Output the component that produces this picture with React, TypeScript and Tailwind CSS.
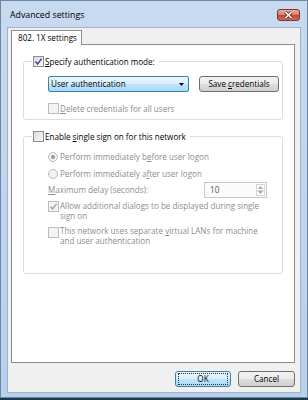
import type { ReactNode } from 'react';

function CheckBox({ checked = false, disabled = false }: { checked?: boolean; disabled?: boolean }) {
  return (
    <span
      className={`flex h-[11px] w-[11px] shrink-0 items-center justify-center border ${
        disabled
          ? 'border-[#bcbcbc] bg-[#f4f4f4]'
          : 'border-[#8e8f8f] bg-[linear-gradient(135deg,#d8dce2,#f7f8f9)]'
      }`}
    >
      {checked && (
        <svg width="9" height="9" viewBox="0 0 9 9">
          <path
            d="M1.5 4.6 L3.6 7 L7.6 1.6"
            fill="none"
            stroke={disabled ? '#a9a9a9' : '#3d4f84'}
            strokeWidth="1.5"
          />
        </svg>
      )}
    </span>
  );
}

function Radio({ selected = false }: { selected?: boolean }) {
  return (
    <span className="flex h-[10px] w-[10px] shrink-0 items-center justify-center rounded-full border border-[#bcbcbc] bg-[#f3f3f3]">
      {selected && <span className="h-[4px] w-[4px] rounded-full bg-[#9a9a9a]" />}
    </span>
  );
}

function Btn({ children, width, primary = false }: { children: ReactNode; width: string; primary?: boolean }) {
  return (
    <div
      className={`flex h-[16px] ${width} items-center justify-center rounded-[3px] border ${
        primary
          ? 'border-[#3c7fb1] bg-[linear-gradient(#eaf6fd_0%,#d9f0fc_50%,#bee6fd_51%,#a7d9f5_100%)]'
          : 'border-[#707070] bg-[linear-gradient(#f2f2f2_0%,#ebebeb_50%,#dddddd_51%,#cfcfcf_100%)]'
      }`}
    >
      {primary ? (
        <span className="flex h-[12px] w-[50px] items-center justify-center border border-dotted border-[#333]">
          {children}
        </span>
      ) : (
        children
      )}
    </div>
  );
}

export default function App() {
  return (
    <div className="h-[400px] w-[308px] bg-[#1c3a4a] font-['Open_Sans',sans-serif] text-[8.1px] leading-[10px] text-black">
      <div className="flex h-[398px] flex-col border border-[#6f86a3] bg-[linear-gradient(#c7daf0,#b9d0ea)]">
        {/* title bar */}
        <div className="flex h-[26px] items-start justify-between">
          <div className="pl-[9px] pt-[9px] text-[8.8px] leading-[10px]">Advanced settings</div>
          <div className="mr-[7px] mt-[8px] flex h-[12px] w-[23px] items-center justify-center rounded-[3px] border border-[#7b3530] bg-[linear-gradient(#eaaea1_0%,#d9806f_45%,#c3463a_55%,#d06a56_100%)]">
            <svg width="9" height="8" viewBox="0 0 9 8">
              <path d="M1.5 1 L7.5 7 M7.5 1 L1.5 7" stroke="#5a2420" strokeWidth="3" />
              <path d="M1.5 1 L7.5 7 M7.5 1 L1.5 7" stroke="#ffffff" strokeWidth="1.6" />
            </svg>
          </div>
        </div>

        {/* client area */}
        <div className="mx-[6px] flex h-[366px] flex-col border border-[#9fb3cc] bg-[#f0f0f0] pl-[3px] pr-[5px] pt-[2px]">
          <div className="flex">
            <div className="relative z-10 -mb-px flex h-[15px] w-[71px] items-center border-x border-t border-[#898c95] bg-white pl-[6px]">
              802. 1X settings
            </div>
          </div>

          <div className="h-[319px] border border-[#898c95] bg-white px-[11px]">
            <fieldset className="mt-[11px] h-[64px] rounded-[3px] border border-[#d5dfe5]">
              <legend className="ml-[8px] flex items-center gap-[1px] pl-[1px] pr-[4px]">
                <CheckBox checked />
                <span>
                  <span className="underline">S</span>pecify authentication mode:
                </span>
              </legend>
              <div className="pl-[24px]">
                <div className="mt-[9px] flex items-center gap-[10px]">
                  <div className="flex h-[16px] w-[141px] items-center justify-between rounded-[2px] border border-[#3c7fb1] bg-[linear-gradient(#eaf6fd_0%,#d9f0fc_50%,#bee6fd_51%,#a7d9f5_100%)] pl-[2px] pr-[4px]">
                    <span>User authentication</span>
                    <svg width="5" height="3" viewBox="0 0 5 3">
                      <path d="M0 0 H5 L2.5 3 Z" fill="#000" />
                    </svg>
                  </div>
                  <Btn width="w-[80px]">
                    <span>
                      Save <span className="underline">c</span>redentials
                    </span>
                  </Btn>
                </div>
                <div className="mt-[11px] flex items-center gap-[1px] text-[#8d8d8d]">
                  <CheckBox disabled />
                  <span>
                    <span className="underline">D</span>elete credentials for all users
                  </span>
                </div>
              </div>
            </fieldset>

            <fieldset className="mt-[11px] h-[143px] rounded-[3px] border border-[#d5dfe5]">
              <legend className="ml-[8px] flex items-center gap-[1px] pl-[1px] pr-[4px]">
                <CheckBox />
                <span>
                  Enable <span className="underline">s</span>ingle sign on for this network
                </span>
              </legend>
              <div className="pl-[24px] text-[#8d8d8d]">
                <div className="mt-[9px] flex h-[11px] items-center gap-[2px]">
                  <Radio selected />
                  <span>
                    Perform immediately b<span className="underline">e</span>fore user logon
                  </span>
                </div>
                <div className="mt-[6px] flex h-[11px] items-center gap-[2px]">
                  <Radio />
                  <span>
                    Perform immediately a<span className="underline">f</span>ter user logon
                  </span>
                </div>
                <div className="mt-[3px] flex h-[16px] items-center">
                  <span className="w-[156px]">
                    <span className="underline">M</span>aximum delay (seconds):
                  </span>
                  <div className="flex h-[16px] w-[63px] items-center justify-between border border-[#c6c9cd] bg-[#fbfbfb] pl-[5px] pr-[1px]">
                    <span className="text-[#555]">10</span>
                    <div className="flex h-[12px] w-[9px] flex-col border border-[#d6d6d6]">
                      <div className="flex flex-1 items-center justify-center border-b border-[#d6d6d6]">
                        <svg width="5" height="3" viewBox="0 0 5 3">
                          <path d="M0 3 H5 L2.5 0 Z" fill="#a8a8a8" />
                        </svg>
                      </div>
                      <div className="flex flex-1 items-center justify-center">
                        <svg width="5" height="3" viewBox="0 0 5 3">
                          <path d="M0 0 H5 L2.5 3 Z" fill="#a8a8a8" />
                        </svg>
                      </div>
                    </div>
                  </div>
                </div>
                <div className="mt-[3px] flex items-start gap-[1px]">
                  <CheckBox checked disabled />
                  <span>
                    Allow additional dialogs to be displayed during single
                    <br />
                    sign on
                  </span>
                </div>
                <div className="mt-[5px] flex items-start gap-[1px]">
                  <span className="mt-[1px]">
                    <CheckBox disabled />
                  </span>
                  <span>
                    This network uses separate <span className="underline">v</span>irtual LANs for machine
                    <br />
                    and user authentication
                  </span>
                </div>
              </div>
            </fieldset>
          </div>

          <div className="mt-[8px] flex justify-end gap-[7px]">
            <Btn width="w-[56px]" primary>
              OK
            </Btn>
            <Btn width="w-[57px]">Cancel</Btn>
          </div>
        </div>
      </div>
    </div>
  );
}
